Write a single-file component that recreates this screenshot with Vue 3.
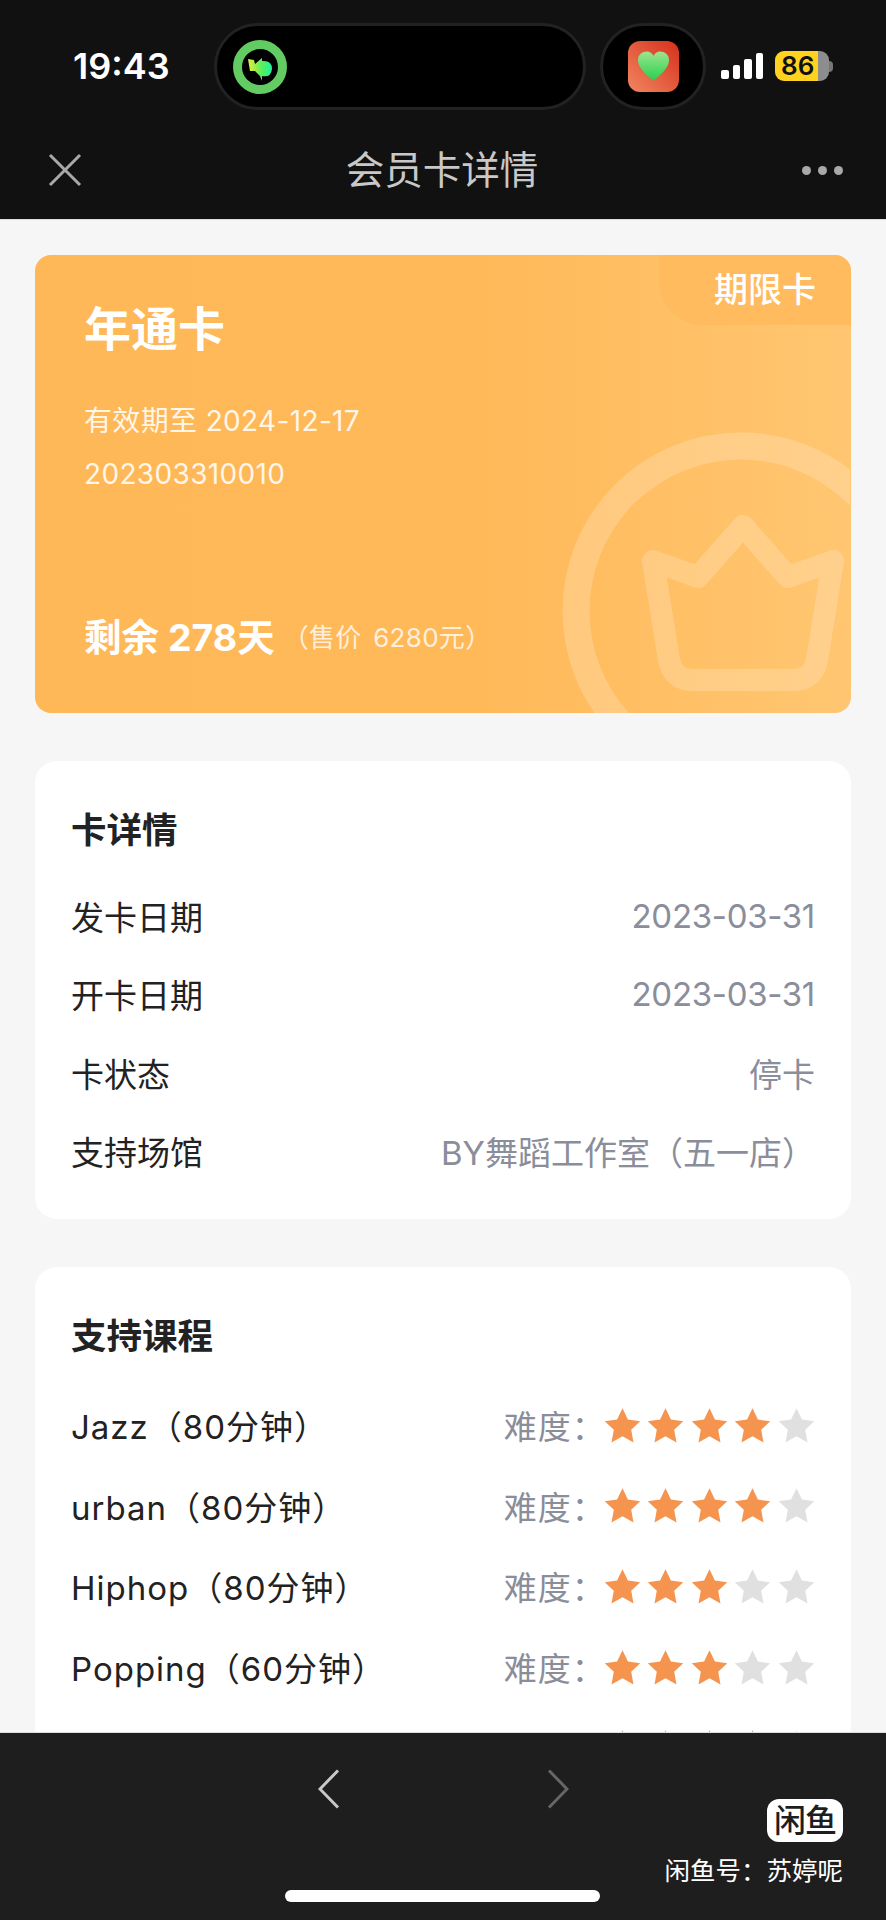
<script setup>
const details = [
  { label: '发卡日期', value: '2023-03-31', num: true },
  { label: '开卡日期', value: '2023-03-31', num: true },
  { label: '卡状态', value: '停卡' },
  { label: '支持场馆', value: 'BY舞蹈工作室（五一店）' }
]
const courses = [
  { name: 'Jazz（80分钟）', stars: 4 },
  { name: 'urban（80分钟）', stars: 4 },
  { name: 'Hiphop（80分钟）', stars: 3 },
  { name: 'Popping（60分钟）', stars: 3 },
  { name: '', stars: 4 }
]
const starPath = 'M18.5 1.2 L23.9 12.6 L36.2 14.2 L27.2 22.8 L29.5 35.4 L18.5 29.3 L7.5 35.4 L9.8 22.8 L.8 14.2 L13.1 12.6 Z'
</script>

<template>
  <div class="phone">
    <header class="top">
      <div class="status">
        <span class="time">19:43</span>
        <div class="island">
          <svg class="ring" width="54" height="54" viewBox="0 0 54 54">
            <defs>
              <linearGradient id="arrow" x1="0" y1="0" x2="1" y2="0">
                <stop offset="0" stop-color="#e6ee3a" />
                <stop offset="0.55" stop-color="#5cf05a" />
                <stop offset="1" stop-color="#1ef0a0" />
              </linearGradient>
            </defs>
            <circle cx="27" cy="27" r="22.5" fill="none" stroke="#62cc62" stroke-width="9" />
            <path d="M15 19 L21 20 L22 24 L29 18 L29 21 Q39 20 39 29 Q38 38 29 36 L29 41 L27 36 L22 31 L17 31 Z" fill="url(#arrow)" />
          </svg>
        </div>
        <div class="island-small">
          <svg width="51" height="51" viewBox="0 0 51 51">
            <defs>
              <linearGradient id="tile" x1="0" y1="1" x2="1" y2="0">
                <stop offset="0" stop-color="#f28660" />
                <stop offset="1" stop-color="#d5301c" />
              </linearGradient>
              <linearGradient id="heart" x1="0" y1="0" x2="0" y2="1">
                <stop offset="0" stop-color="#a0e48c" />
                <stop offset="1" stop-color="#22d050" />
              </linearGradient>
            </defs>
            <rect width="51" height="51" rx="12" fill="url(#tile)" />
            <path d="M25.5 40 C18 33 10 27 10 19 C10 13 15 10 20 10.500 C23 11 25 13.500 25.500 15 C26 13.500 28 11 31 10.500 C36 10 41 13 41 19 C41 27 33 33 25.500 40 Z" fill="url(#heart)" />
          </svg>
        </div>
        <div class="signal">
          <i class="b1"></i><i class="b2"></i><i class="b3"></i><i class="b4"></i>
        </div>
        <div class="battery">
          <div class="battery-body"><span>86</span></div>
          <div class="battery-nub"></div>
        </div>
      </div>
      <nav class="nav">
        <svg width="34" height="34" viewBox="0 0 34 34">
          <path d="M2 2 L32 32 M32 2 L2 32" stroke="#a9a9a9" stroke-width="3" fill="none" />
        </svg>
        <h1>会员卡详情</h1>
        <div class="dots"><i></i><i></i><i></i></div>
      </nav>
    </header>

    <main class="content">
      <section class="member">
        <svg class="deco" width="815" height="458" viewBox="0 0 815 458">
          <circle cx="706" cy="356" r="165" fill="none" stroke="#fff" stroke-opacity="0.2" stroke-width="27" />
          <path d="M618 306 L663 322 L708 271 L753 322 L798 306 L782 405 Q778 425 758 425 L658 425 Q638 425 634 405 Z" fill="none" stroke="#fff" stroke-opacity="0.2" stroke-width="22" stroke-linejoin="round" />
        </svg>
        <span class="tag">期限卡</span>
        <h2>年通卡</h2>
        <p class="line first">有效期至 2024-12-17</p>
        <p class="line">202303310010</p>
        <p class="remain"><b>剩余 278天</b><span>（售价 6280元）</span></p>
      </section>

      <section class="panel first-panel">
        <h3>卡详情</h3>
        <div v-for="d in details" :key="d.label" class="row">
          <span>{{ d.label }}</span>
          <span class="value" :class="{ num: d.num }">{{ d.value }}</span>
        </div>
      </section>

      <section class="panel">
        <h3>支持课程</h3>
        <div v-for="c in courses" :key="c.name" class="row course">
          <span class="name">{{ c.name }}</span>
          <div class="level">
            <span class="value hard">{{ c.name ? '难度：' : '' }}</span>
            <div class="stars">
              <svg v-for="n in 5" :key="n" width="37" height="37" viewBox="0 0 37 37">
                <path :d="starPath" :fill="n <= c.stars ? '#f5944e' : '#e0e0e0'" />
              </svg>
            </div>
          </div>
        </div>
      </section>
    </main>

    <footer class="bottom">
      <svg class="chev" width="22" height="40" viewBox="0 0 22 40">
        <path d="M20 1.500 L2 20 L20 38.500" fill="none" stroke="#c8c8c8" stroke-width="3" />
      </svg>
      <svg class="chev next" width="22" height="40" viewBox="0 0 22 40">
        <path d="M2 1.500 L20 20 L2 38.500" fill="none" stroke="#666" stroke-width="3" />
      </svg>
      <div class="brand">
        <div class="logo">闲鱼</div>
        <div class="account">闲鱼号：苏婷呢</div>
      </div>
      <div class="home"></div>
    </footer>
  </div>
</template>

<style>
html, body { margin: 0; background: #f6f6f6; }
</style>

<style scoped>
.phone {
  position: relative;
  width: 886px;
  height: 1920px;
  display: flex;
  flex-direction: column;
  overflow: hidden;
  background: #f6f6f6;
  font-family: Inter, "Noto Sans CJK SC", sans-serif;
  color: #222;
}
h1, h2, h3, p { margin: 0; }

.top { height: 220px; background: #111; flex: none; border-bottom: 1px solid #ddd; box-sizing: border-box; }
.status { height: 127px; display: flex; align-items: flex-start; }
.time { width: 141px; margin-left: 73px; margin-top: 46px; color: #fff; font-size: 36px; line-height: 40px; font-weight: 600; }
.island {
  width: 372px; height: 87px; margin-top: 23px; box-sizing: border-box;
  background: #000; border: 3px solid #222; border-radius: 44px;
  display: flex; align-items: center; padding-left: 16px;
}
.island-small {
  width: 106px; height: 87px; margin-top: 23px; margin-left: 14px; box-sizing: border-box;
  background: #000; border: 3px solid #222; border-radius: 44px;
  display: flex; align-items: center; justify-content: center;
}
.signal { display: flex; align-items: flex-end; gap: 4px; height: 26px; margin: 53px 0 0 15px; }
.signal i { width: 7.500px; background: #fff; border-radius: 2px; display: block; }
.b1 { height: 9px; } .b2 { height: 14px; } .b3 { height: 20px; } .b4 { height: 26px; }
.battery { display: flex; align-items: center; margin: 51px 0 0 12px; height: 30px; }
.battery-body {
  width: 54px; height: 30px; border-radius: 9px; box-sizing: border-box;
  background: linear-gradient(90deg, #ffd21f 80%, #8d8d8d 80%);
  color: #111; font-size: 26px; font-weight: 600; line-height: 30px; padding-left: 6px;
}
.battery-nub { width: 4px; height: 11px; background: #777; border-radius: 0 4px 4px 0; }

.nav { height: 86px; display: flex; align-items: center; padding: 0 43px 0 48px; box-sizing: border-box; justify-content: space-between; }
.nav h1 { color: #c8c8c8; font-size: 38.500px; font-weight: 400; line-height: 50px; }
.dots { display: flex; gap: 7px; }
.dots i { width: 9px; height: 9px; border-radius: 50%; background: #a9a9a9; display: block; }

.content { flex: 1; min-height: 0; overflow: hidden; padding: 35px 35px 0; display: flex; flex-direction: column; gap: 48px; }

.member {
  position: relative; flex: none; height: 458px; box-sizing: border-box;
  border-radius: 16px; overflow: hidden; padding: 44px 49px 0;
  background: linear-gradient(90deg, #ffb857 0%, #ffb959 55%, #ffc671 100%);
  color: #fff;
}
.deco { position: absolute; left: 0; top: 0; }
.tag {
  position: absolute; right: 0; top: 0; width: 192px; height: 70px; box-sizing: border-box;
  padding: 12px 0 0 55px; background: #ffbb5e; border-bottom-left-radius: 44px;
  font-size: 34px; line-height: 46px; font-weight: 500;
}
.member h2 { position: relative; font-size: 47px; line-height: 60px; font-weight: 600; }
.line { position: relative; font-size: 28px; line-height: 40px; color: rgba(255, 255, 255, .88); margin-top: 13px; letter-spacing: .35px; }
.line.first { margin-top: 42px; }
.remain { position: relative; margin-top: 119px; display: flex; align-items: center; line-height: 50px; }
.remain b { font-size: 37.500px; font-weight: 700; }
.remain span { font-size: 26px; margin-left: 8px; word-spacing: 4px; letter-spacing: .3px; color: rgba(255, 255, 255, .8); }

.panel { flex: none; background: #fff; border-radius: 22px; padding: 46px 36px 0; box-sizing: border-box; }
.first-panel { height: 458px; }
.panel h3 { font-size: 35.500px; line-height: 48px; font-weight: 700; margin-bottom: 24px; color: #222; }
.first-panel h3 { margin-bottom: 22px; }
.row { display: flex; justify-content: space-between; align-items: center; height: 78.300px; font-size: 33px; }
.value { color: #8a8d9a; }
.num { letter-spacing: -.3px; }
.course { height: 80.600px; }
.name { letter-spacing: 1px; }
.level { display: flex; align-items: center; }
.hard { font-size: 33px; letter-spacing: 1px; width: 100px; white-space: nowrap; }
.stars { display: flex; gap: 6.600px; }

.bottom {
  position: relative; flex: none; height: 188px; box-sizing: border-box; background: #1e1e1e;
  border-top: 1px solid #ddd; display: flex; align-items: flex-start; padding: 36px 43px 0 318px;
}
.next { margin-left: 207px; }
.brand { margin-left: auto; margin-top: 30px; display: flex; flex-direction: column; align-items: flex-end; }
.logo {
  width: 76px; height: 43px; background: #fff; border-radius: 12px; color: #1e1e1e;
  font-size: 32px; line-height: 43px; text-align: center; font-weight: 500; letter-spacing: -1px;
}
.account { color: #fff; font-size: 25.500px; line-height: 36px; margin-top: 11px; white-space: nowrap; }
.home { position: absolute; left: 285px; top: 157px; width: 315px; height: 12px; background: #fff; border-radius: 6px; }
</style>
